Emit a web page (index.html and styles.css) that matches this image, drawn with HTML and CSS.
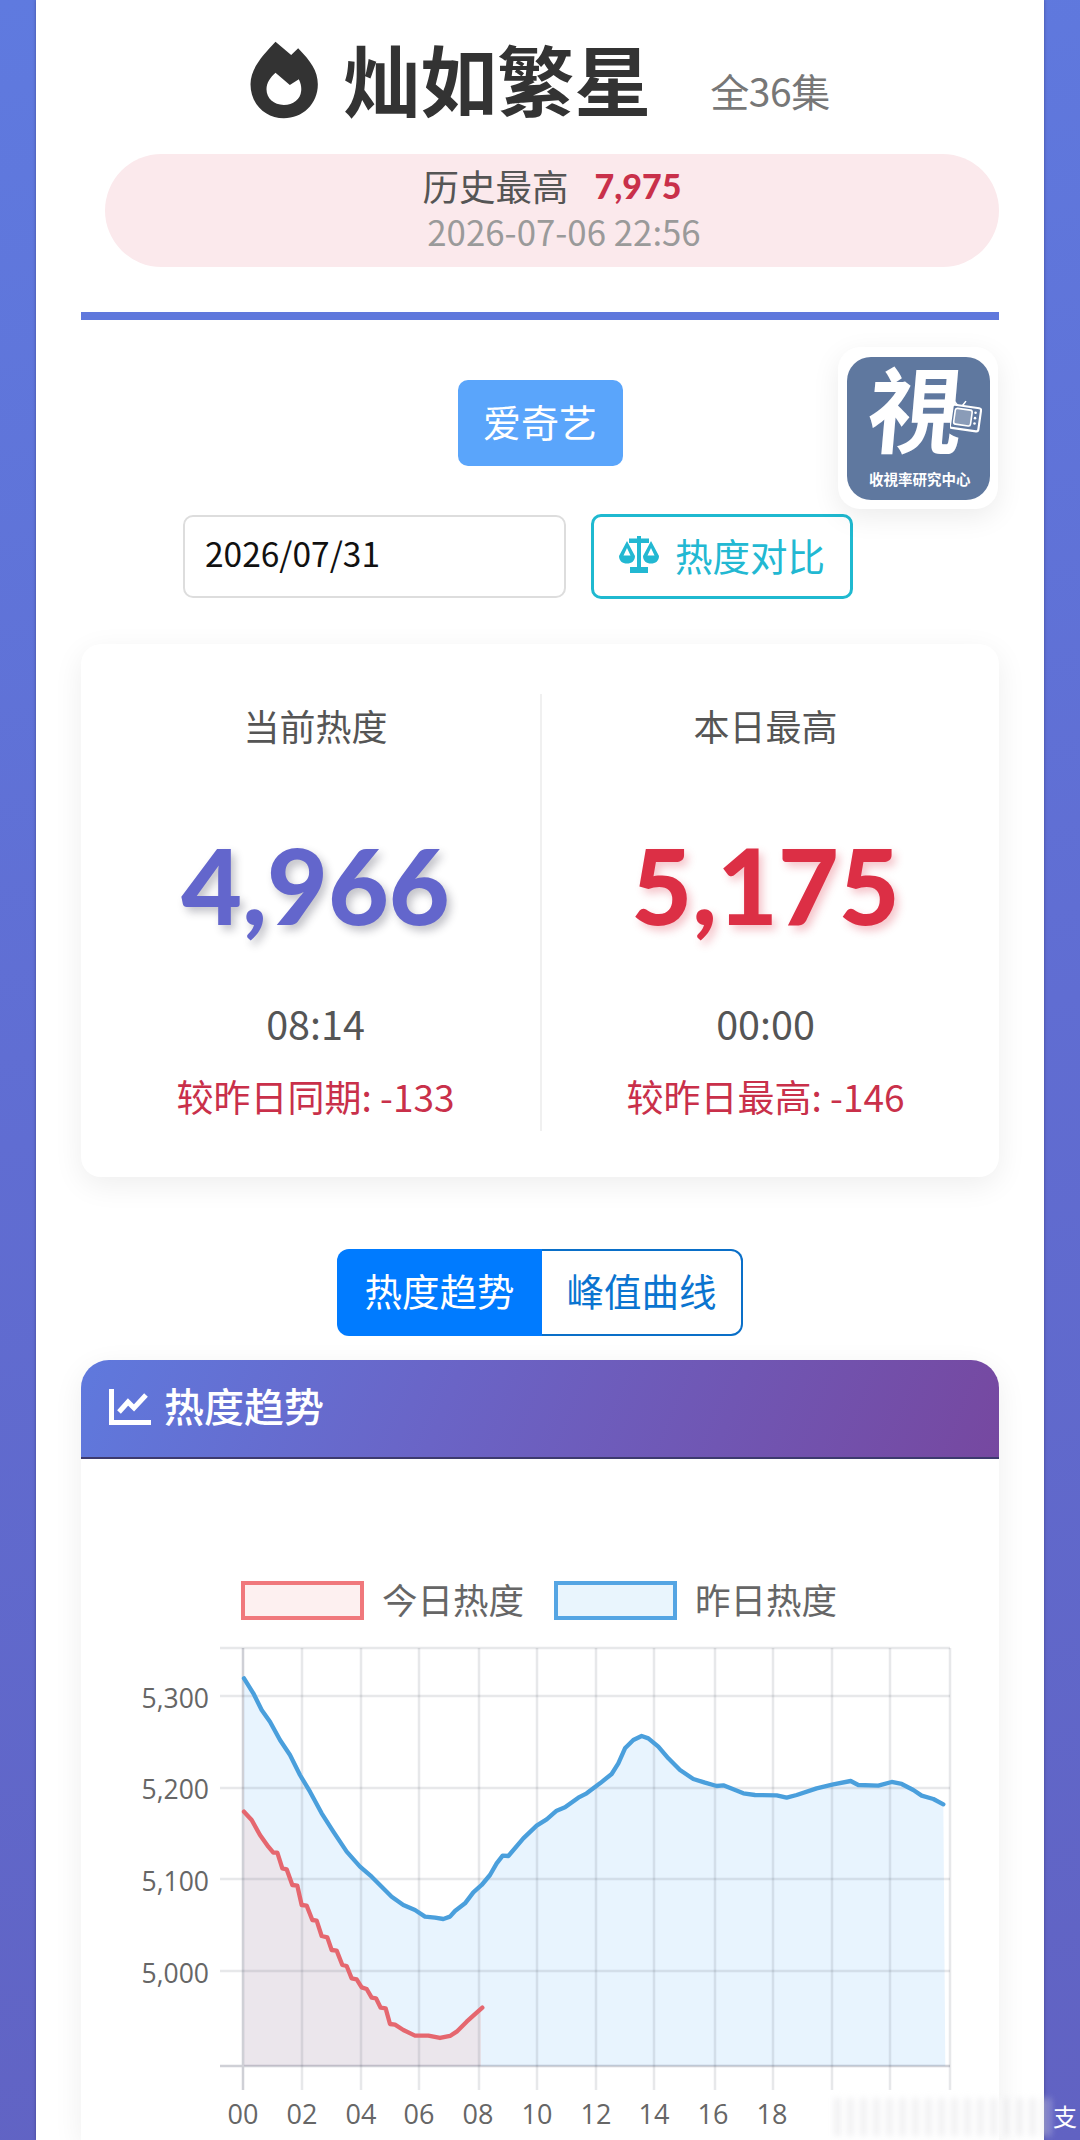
FILE: index.html
```html
<!DOCTYPE html>
<html lang="zh-CN">
<head>
<meta charset="utf-8">
<title>灿如繁星</title>
<link rel="stylesheet" href="styles.css">
</head>
<body>
<main class="sheet">
  <header class="title-row">
    <svg class="flame" viewBox="60 60 204 234" aria-hidden="true">
      <path fill-rule="evenodd" d="M135 62L182 102L203 82C240 120 262 150 262 190C262 250 215 292 160 292C105 292 60 250 60 190C60 140 100 100 135 62ZM135 155L178 192L205 175C212 190 213 200 212 210C210 235 188 252 160 252C130 252 108 232 108 205C108 185 120 168 135 155Z"/>
    </svg>
    <h1 class="title">灿如繁星</h1>
    <span class="episodes">全36集</span>
  </header>

  <section class="record">
    <div class="record-line"><span>历史最高</span><strong>7,975</strong></div>
    <div class="record-date">2026-07-06 22:56</div>
  </section>

  <div class="rule"></div>

  <section class="controls">
    <div class="logo-card">
      <div class="logo">
        <span class="logo-char">視</span>
        <svg class="logo-tv" viewBox="0 0 30 32" aria-hidden="true">
          <path class="tv-line" d="M8 7L3 1M11 7L15 2"/>
          <rect class="tv-body" x="1" y="7" width="27" height="22" rx="2" transform="rotate(8 15 18)"/>
          <rect class="tv-screen" x="4" y="10" width="16" height="15" rx="2" transform="rotate(8 15 18)"/>
          <circle class="tv-dot" cx="24" cy="13" r="1.2"/><circle class="tv-dot" cx="23.5" cy="18" r="1.2"/><circle class="tv-dot" cx="23" cy="23" r="1.2"/>
        </svg>
        <span class="logo-name">收視率研究中心</span>
      </div>
    </div>
    <div class="platform-row"><button class="platform">爱奇艺</button></div>
    <div class="date-row">
      <div class="date-input">2026/07/31</div>
      <button class="compare">
        <svg class="scale-icon" viewBox="0 0 40 37" aria-hidden="true">
          <path d="M10 2.500H18V0H22V2.500H30V7H22V31H29V37H11V31H18V7H10Z"/>
          <path fill-rule="evenodd" d="M8 5L16 20C16 25 12.500 27.500 8 27.500C3.500 27.500 0 25 0 20ZM8 12L4.500 19.500H11.500Z"/>
          <path fill-rule="evenodd" d="M32 5L40 20C40 25 36.500 27.500 32 27.500C27.500 27.500 24 25 24 20ZM32 12L28.500 19.500H35.500Z"/>
        </svg>
        <span>热度对比</span>
      </button>
    </div>
  </section>

  <section class="stats">
    <div class="stat">
      <div class="stat-label">当前热度</div>
      <div class="stat-value stat-value-blue">4,966</div>
      <div class="stat-time">08:14</div>
      <div class="stat-diff">较昨日同期: -133</div>
    </div>
    <div class="stat stat-right">
      <div class="stat-label">本日最高</div>
      <div class="stat-value stat-value-red">5,175</div>
      <div class="stat-time">00:00</div>
      <div class="stat-diff">较昨日最高: -146</div>
    </div>
  </section>

  <nav class="tabs">
    <button class="tab tab-active">热度趋势</button>
    <button class="tab">峰值曲线</button>
  </nav>

  <section class="chart-card">
    <header class="chart-head">
      <svg class="line-icon" viewBox="0 0 42 36" aria-hidden="true">
        <path class="line-icon-axis" d="M2.500 0V33.500H42"/>
        <path class="line-icon-trend" d="M10 23L19 13L25 19L37 6"/>
      </svg>
      <h2 class="chart-title">热度趋势</h2>
    </header>
    <div class="chart-body">
      <div class="legend">
        <span class="swatch swatch-red"></span><span class="legend-text">今日热度</span>
        <span class="swatch swatch-blue"></span><span class="legend-text">昨日热度</span>
      </div>
      <svg class="chart" viewBox="81 1640 918 500" role="img" aria-label="热度趋势折线图">
        <g transform="translate(120 1630) scale(.33333)">
          <polygon class="fill-blue" points="372,1308 372,145 400,190 425,240 450,275 480,330 510,375 540,435 570,485 605,550 640,605 680,665 720,710 755,740 785,770 815,800 850,825 885,840 915,860 945,863 970,867 990,860 1005,843 1035,820 1060,787 1085,765 1110,735 1130,700 1148,677 1165,678 1210,625 1250,587 1280,568 1310,542 1335,532 1375,503 1400,490 1440,460 1475,432 1495,400 1515,355 1540,330 1565,318 1585,325 1615,350 1645,385 1680,420 1720,447 1755,458 1790,468 1810,466 1840,478 1870,490 1905,495 1970,496 2000,503 2030,495 2090,475 2140,463 2192,453 2215,465 2275,467 2315,456 2345,462 2380,480 2405,497 2440,507 2470,523 2476,1308"/>
          <polygon class="fill-red" points="372,1308 372,545 395,570 420,615 445,650 460,668 472,668 487,715 500,718 517,765 532,767 545,825 560,827 577,870 590,872 605,918 622,922 635,960 650,962 667,1005 680,1008 695,1045 710,1048 725,1072 740,1077 755,1103 768,1105 782,1133 797,1135 810,1182 825,1184 850,1200 885,1217 925,1217 960,1224 990,1218 1010,1205 1040,1175 1060,1157 1083,1135 1083,1308"/>
        </g>
        <g class="grid">
          <path d="M220 1648H950M220 1696H950M220 1788H950M220 1879H950M220 1971H950"/>
          <path d="M302 1648V2090M361 1648V2090M419 1648V2090M479 1648V2090M537 1648V2090M596 1648V2090M654 1648V2090M715 1648V2090M773 1648V2090M832 1648V2090M890 1648V2090M950 1648V2090"/>
        </g>
        <path class="axis" d="M243 1648V2090M220 2066H950"/>
        <g transform="translate(120 1630) scale(.33333)">
          <polyline class="line-blue" points="372,145 400,190 425,240 450,275 480,330 510,375 540,435 570,485 605,550 640,605 680,665 720,710 755,740 785,770 815,800 850,825 885,840 915,860 945,863 970,867 990,860 1005,843 1035,820 1060,787 1085,765 1110,735 1130,700 1148,677 1165,678 1210,625 1250,587 1280,568 1310,542 1335,532 1375,503 1400,490 1440,460 1475,432 1495,400 1515,355 1540,330 1565,318 1585,325 1615,350 1645,385 1680,420 1720,447 1755,458 1790,468 1810,466 1840,478 1870,490 1905,495 1970,496 2000,503 2030,495 2090,475 2140,463 2192,453 2215,465 2275,467 2315,456 2345,462 2380,480 2405,497 2440,507 2470,523"/>
          <polyline class="line-red" points="372,545 395,570 420,615 445,650 460,668 472,668 487,715 500,718 517,765 532,767 545,825 560,827 577,870 590,872 605,918 622,922 635,960 650,962 667,1005 680,1008 695,1045 710,1048 725,1072 740,1077 755,1103 768,1105 782,1133 797,1135 810,1182 825,1184 850,1200 885,1217 925,1217 960,1224 990,1218 1010,1205 1040,1175 1060,1157 1087,1133"/>
        </g>
        <g class="y-labels">
          <text x="209" y="1708">5,300</text>
          <text x="209" y="1799">5,200</text>
          <text x="209" y="1891">5,100</text>
          <text x="209" y="1983">5,000</text>
        </g>
        <g class="x-labels">
          <text x="243" y="2124">00</text>
          <text x="302" y="2124">02</text>
          <text x="361" y="2124">04</text>
          <text x="419" y="2124">06</text>
          <text x="478" y="2124">08</text>
          <text x="537" y="2124">10</text>
          <text x="596" y="2124">12</text>
          <text x="654" y="2124">14</text>
          <text x="713" y="2124">16</text>
          <text x="772" y="2124">18</text>
        </g>
      </svg>
    </div>
  </section>
</main>
<div class="watermark" aria-hidden="true"></div>
<span class="watermark-char">支</span>
</body>
</html>
```
FILE: styles.css
```css
* { box-sizing: border-box; }

html, body {
  margin: 0;
  height: 2140px;
  overflow: hidden;
}

body {
  position: relative;
  width: 1080px;
  background: linear-gradient(172deg, #5f7adf 0%, #606dd2 50%, #6162c2 100%);
  font-family: "Noto Sans CJK SC", "Noto Sans", sans-serif;
  color: #333;
}

.sheet {
  width: 1008px;
  height: 2140px;
  margin: 0 36px;
  padding: 0 45px;
  background: #fff;
  box-shadow: 0 0 3px rgba(40, 40, 90, .5);
}

button {
  font: inherit;
  margin: 0;
  cursor: pointer;
}

/* Title */
.title-row {
  display: flex;
  justify-content: center;
  align-items: center;
  height: 80px;
  padding-top: 40px;
  box-sizing: content-box;
}

.flame {
  width: 69px;
  height: 78px;
  fill: #333;
  flex: none;
}

.title {
  margin: -4px 0 0 24px;
  font-size: 77px;
  line-height: 80px;
  font-weight: 700;
  color: #333;
}

.episodes {
  margin: 20px 0 0 59px;
  font-size: 39px;
  line-height: 50px;
  color: #777;
  letter-spacing: -.5px;
}

/* Record pill */
.record {
  display: flex;
  flex-direction: column;
  align-items: center;
  justify-content: center;
  height: 113px;
  margin: 34px 0 0 24px;
  padding-bottom: 5px;
  border-radius: 57px;
  background: #fbe9ec;
}

.record-line {
  display: flex;
  align-items: center;
  gap: 26px;
  font-size: 36.500px;
  line-height: 46px;
  color: #555;
}

.record-line strong {
  font-family: Lato, sans-serif;
  font-size: 34px;
  font-weight: 900;
  color: #c9304a;
}

.record-date {
  margin-left: 24px;
  font-size: 34.800px;
  line-height: 44px;
  color: #9a9a9a;
}

.rule {
  height: 8px;
  margin-top: 45px;
  background: #5f78dc;
}

/* Controls */
.controls {
  position: relative;
}

.logo-card {
  position: absolute;
  top: 27px;
  right: 1px;
  width: 160px;
  height: 162px;
  padding: 10px 9px;
  border-radius: 22px;
  background: #fff;
  box-shadow: 0 8px 28px rgba(0, 0, 0, .08);
}

.logo {
  position: relative;
  width: 143px;
  height: 143px;
  overflow: hidden;
  border-radius: 24px;
  background: #5f789f;
  color: #fff;
}

.logo-char {
  position: absolute;
  left: 22px;
  top: 0;
  font-family: "Noto Sans CJK TC", sans-serif;
  font-size: 94px;
  line-height: 96px;
  font-weight: 700;
  transform: skewX(-5deg);
}

.logo-tv {
  position: absolute;
  left: 103px;
  top: 42px;
  width: 32px;
  height: 34px;
}

.tv-line { fill: none; stroke: #fff; stroke-width: 1.500; }
.tv-body { fill: #5f789f; stroke: #fff; stroke-width: 2; }
.tv-screen { fill: #8a9cb8; stroke: #fff; stroke-width: 1.500; }
.tv-dot { fill: #fff; }

.logo-name {
  position: absolute;
  left: 22px;
  top: 110px;
  font-size: 14.500px;
  line-height: 24px;
  font-weight: 700;
  white-space: nowrap;
}

.platform-row {
  display: flex;
  justify-content: center;
  padding-top: 60px;
}

.platform {
  width: 165px;
  height: 86px;
  padding: 0 0 6px;
  border: 0;
  border-radius: 10px;
  background: #5aa5fb;
  color: #fff;
  font-size: 38px;
}

.date-row {
  display: flex;
  justify-content: center;
  align-items: center;
  gap: 25px;
  margin-top: 48px;
  padding-right: 44px;
}

.date-input {
  display: flex;
  align-items: center;
  width: 383px;
  height: 83px;
  padding: 0 0 9px 20px;
  border: 2px solid #ddd;
  border-radius: 10px;
  background: #fff;
  color: #111;
  font-size: 33.500px;
}

.compare {
  display: flex;
  align-items: center;
  gap: 16px;
  width: 262px;
  height: 85px;
  padding: 0 0 4px 25px;
  border: 3px solid #1fb9d0;
  border-radius: 10px;
  background: #fff;
  color: #22b8d2;
  font-size: 37.500px;
  white-space: nowrap;
}

.scale-icon {
  width: 40px;
  height: 37px;
  fill: #22b8d2;
  flex: none;
}

/* Stats */
.stats {
  display: grid;
  grid-template-columns: 1fr 1fr;
  height: 533px;
  margin-top: 45px;
  padding: 50px 10px 0;
  border-radius: 20px;
  background: #fff;
  box-shadow: 0 8px 30px rgba(0, 0, 0, .07);
}

.stat {
  display: flex;
  flex-direction: column;
  align-items: center;
  height: 437px;
  padding-top: 6px;
  text-align: center;
}

.stat-right {
  border-left: 2px solid #f0f0f0;
}

.stat-label {
  font-size: 36px;
  line-height: 50px;
  color: #555;
}

.stat-value {
  margin-top: 74px;
  font-family: Lato, Roboto, sans-serif;
  font-size: 105px;
  line-height: 120px;
  font-weight: 900;
}

.stat-value-blue {
  color: #6366cc;
  text-shadow: 4px 5px 8px rgba(40, 40, 60, .28);
}

.stat-value-red {
  color: #dc2f45;
  text-shadow: 4px 5px 8px rgba(220, 47, 69, .28);
}

.stat-time {
  margin-top: 54px;
  font-size: 39.500px;
  line-height: 50px;
  color: #555;
}

.stat-diff {
  margin-top: 23px;
  font-size: 37px;
  line-height: 50px;
  color: #c9304a;
  white-space: nowrap;
}

/* Tabs */
.tabs {
  display: flex;
  justify-content: center;
  margin-top: 72px;
}

.tab {
  width: 201px;
  height: 87px;
  padding: 0 0 7px;
  border: 2px solid #0a6fc8;
  border-left: 0;
  border-radius: 0 12px 12px 0;
  background: #fff;
  color: #0a74d0;
  font-size: 37.500px;
}

.tab-active {
  width: 205px;
  border: 0;
  border-radius: 12px 0 0 12px;
  background: #007bff;
  color: #fff;
}

/* Chart card */
.chart-card {
  height: 780px;
  margin-top: 24px;
  border-radius: 28px 28px 0 0;
  background: #fff;
  box-shadow: 0 8px 30px rgba(0, 0, 0, .07);
}

.chart-head {
  display: flex;
  align-items: center;
  gap: 13px;
  height: 99px;
  padding: 0 0 4px 28px;
  border-radius: 28px 28px 0 0;
  border-bottom: 2px solid #3d3a6e;
  background: linear-gradient(112deg, #5f79dd 0%, #6a64c6 40%, #7648a0 100%);
}

.line-icon {
  width: 42px;
  height: 36px;
  flex: none;
}

.line-icon-axis, .line-icon-trend {
  fill: none;
  stroke: #fff;
  stroke-width: 5px;
}

.chart-title {
  margin: -3px 0 0;
  font-size: 40px;
  line-height: 50px;
  font-weight: 500;
  color: #fff;
}

.chart-body {
  display: flex;
  flex-direction: column;
  padding-top: 122px;
}

.legend {
  display: flex;
  justify-content: center;
  align-items: center;
  height: 39px;
  padding-right: 2px;
}

.swatch {
  width: 123px;
  height: 39px;
  border: 4px solid;
}

.swatch-red {
  border-color: #f0787c;
  background: #fdf0f0;
}

.swatch-blue {
  margin-left: 30px;
  border-color: #55a5e3;
  background: #e9f5fd;
}

.legend-text {
  margin: -5px 0 0 18px;
  font-size: 35.500px;
  line-height: 39px;
  color: #666;
}

.chart {
  display: block;
  width: 918px;
  height: 500px;
  margin-top: 20px;
  flex: none;
}

.fill-blue { fill: #e8f4fe; }
.fill-red { fill: #ebe6ec; }

.grid path {
  fill: none;
  stroke: rgba(70, 75, 95, .13);
  stroke-width: 2.500px;
}

.axis {
  fill: none;
  stroke: rgba(70, 75, 95, .26);
  stroke-width: 2.500px;
}

.line-blue, .line-red {
  fill: none;
  stroke-width: 13px;
  stroke-linejoin: round;
  stroke-linecap: round;
}

.line-blue { stroke: #4a9fdc; }
.line-red { stroke: #e5676f; }

.y-labels text {
  font-family: "Open Sans", sans-serif;
  font-size: 26.500px;
  text-anchor: end;
  fill: #666;
}

.x-labels text {
  font-family: "Open Sans", sans-serif;
  font-size: 27px;
  text-anchor: middle;
  fill: #666;
}

/* Watermark */
.watermark {
  position: absolute;
  left: 835px;
  top: 2098px;
  width: 215px;
  height: 38px;
  background:
    repeating-linear-gradient(90deg, rgba(120, 120, 130, .14) 0 5px, rgba(255, 255, 255, .7) 5px 13px);
  filter: blur(3px);
}

.watermark-char {
  position: absolute;
  left: 1053px;
  top: 2100px;
  font-size: 24px;
  line-height: 32px;
  color: #fff;
}
```
